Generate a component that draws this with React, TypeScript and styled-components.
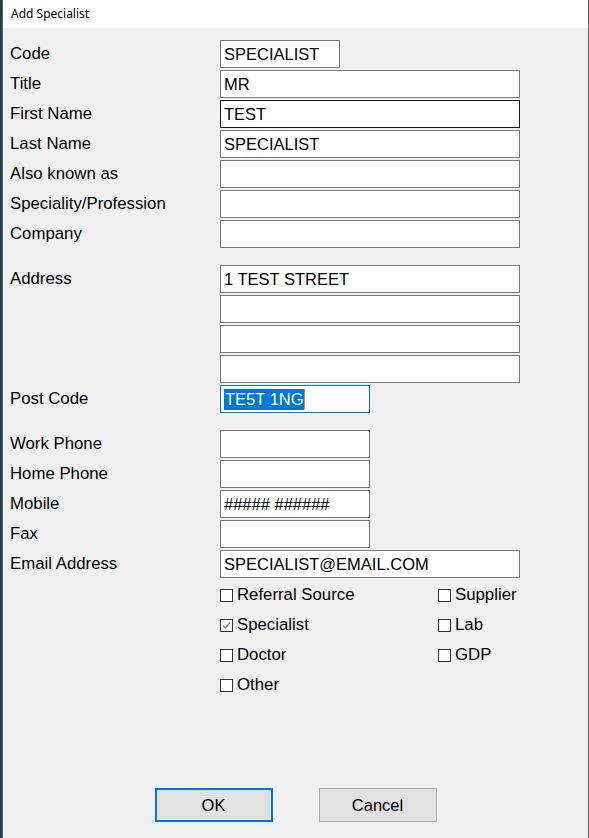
import { FC, ReactNode } from "react";
import styled, { createGlobalStyle } from "styled-components";

const GlobalStyle = createGlobalStyle`
    html, body {
        margin: 0;
        padding: 0;
        background: #1f3f48;
    }
`;

type FieldState = "normal" | "hover" | "focus";

interface RowProps {
    label: string;
    children: ReactNode;
}

const FormRow: FC<RowProps> = ({ label, children }) => (
    <StyledRow>
        <StyledLabel>{label}</StyledLabel>
        <StyledFieldStack>{children}</StyledFieldStack>
    </StyledRow>
);

const CheckBox: FC<{ label: string; checked?: boolean }> = ({ label, checked }) => (
    <StyledCheckItem>
        <StyledBox>
            {checked && (
                <svg width="11" height="11" viewBox="0 0 11 11">
                    <path d="M2 5.5 L4.5 8 L9 2.5" fill="none" stroke="#8a8a8a" strokeWidth="1.2" />
                </svg>
            )}
        </StyledBox>
        {label}
    </StyledCheckItem>
);

export default function App() {
    return (
        <>
            <GlobalStyle />
            <StyledDesktop>
                <StyledWindow>
                    <StyledTitleBar>Add Specialist</StyledTitleBar>
                    <StyledBody>
                        <StyledSection>
                            <FormRow label="Code">
                                <StyledField $width={120}>SPECIALIST</StyledField>
                            </FormRow>
                            <FormRow label="Title">
                                <StyledField>MR</StyledField>
                            </FormRow>
                            <FormRow label="First Name">
                                <StyledField $state="hover">TEST</StyledField>
                            </FormRow>
                            <FormRow label="Last Name">
                                <StyledField>SPECIALIST</StyledField>
                            </FormRow>
                            <FormRow label="Also known as">
                                <StyledField />
                            </FormRow>
                            <FormRow label="Speciality/Profession">
                                <StyledField />
                            </FormRow>
                            <FormRow label="Company">
                                <StyledField />
                            </FormRow>
                        </StyledSection>

                        <StyledSection>
                            <FormRow label="Address">
                                <StyledField>1 TEST STREET</StyledField>
                                <StyledField />
                                <StyledField />
                                <StyledField />
                            </FormRow>
                            <FormRow label="Post Code">
                                <StyledField $width={150} $state="focus">
                                    <StyledSelection>TE5T 1NG</StyledSelection>
                                    <StyledCaret />
                                </StyledField>
                            </FormRow>
                        </StyledSection>

                        <StyledSection>
                            <FormRow label="Work Phone">
                                <StyledField $width={150} />
                            </FormRow>
                            <FormRow label="Home Phone">
                                <StyledField $width={150} />
                            </FormRow>
                            <FormRow label="Mobile">
                                <StyledField $width={150}>##### ######</StyledField>
                            </FormRow>
                            <FormRow label="Fax">
                                <StyledField $width={150} />
                            </FormRow>
                            <FormRow label="Email Address">
                                <StyledField>SPECIALIST@EMAIL.COM</StyledField>
                            </FormRow>
                            <StyledCheckGrid>
                                <CheckBox label="Referral Source" />
                                <CheckBox label="Supplier" />
                                <CheckBox label="Specialist" checked />
                                <CheckBox label="Lab" />
                                <CheckBox label="Doctor" />
                                <CheckBox label="GDP" />
                                <CheckBox label="Other" />
                            </StyledCheckGrid>
                        </StyledSection>
                    </StyledBody>

                    <StyledFooter>
                        <StyledButton type="button" $default>
                            OK
                        </StyledButton>
                        <StyledButton type="button">Cancel</StyledButton>
                    </StyledFooter>
                </StyledWindow>
            </StyledDesktop>
        </>
    );
}

const StyledDesktop = styled.div`
    display: flex;
    width: 589px;
    height: 838px;
    padding-left: 2px;
    box-sizing: border-box;
    overflow: hidden;
`;

const StyledWindow = styled.div`
    flex: 1;
    display: flex;
    flex-direction: column;
    background: #f0f0f0;
    border-left: 1px solid #5f5f5f;
    border-right: 1px solid #5f5f5f;
    font-family: "Liberation Sans", Arial, sans-serif;
    font-size: 16.8px;
    color: #000;
`;

const StyledTitleBar = styled.div`
    height: 28px;
    background: #fff;
    padding-left: 8px;
    display: flex;
    align-items: center;
    font-family: "Noto Sans", "Open Sans", sans-serif;
    font-size: 12px;
    padding-bottom: 2px;
    box-sizing: border-box;
`;

const StyledBody = styled.div`
    padding: 12px 0 0 7px;
    display: flex;
    flex-direction: column;
    gap: 17px;
`;

const StyledSection = styled.div`
    display: flex;
    flex-direction: column;
    gap: 2px;
`;

const StyledRow = styled.div`
    display: flex;
    align-items: flex-start;
`;

const StyledLabel = styled.div`
    width: 210px;
    flex-shrink: 0;
    line-height: 28px;
    height: 28px;
`;

const StyledFieldStack = styled.div`
    display: flex;
    flex-direction: column;
    gap: 2px;
`;

const StyledField = styled.div<{ $width?: number; $state?: FieldState }>`
    width: ${({ $width }) => $width ?? 300}px;
    height: 28px;
    box-sizing: border-box;
    background: #fff;
    border: 1px solid
        ${({ $state }) => ($state === "hover" ? "#1a1a1a" : $state === "focus" ? "#0078d7" : "#7a7a7a")};
    padding: 0 3px;
    display: flex;
    align-items: center;
    white-space: nowrap;
    font-size: 16.5px;
`;

const StyledSelection = styled.span`
    background: #0078d7;
    color: #fff;
    line-height: 21px;
    padding: 0 0 0 1px;
`;

const StyledCaret = styled.span`
    width: 1px;
    height: 20px;
    background: #f08020;
`;

const StyledCheckGrid = styled.div`
    display: grid;
    grid-template-columns: 218px auto;
    grid-auto-rows: 30px;
    padding-left: 210px;
`;

const StyledCheckItem = styled.div`
    display: flex;
    align-items: center;
    gap: 4px;
    height: 30px;
`;

const StyledBox = styled.span`
    width: 13px;
    height: 13px;
    box-sizing: border-box;
    border: 1px solid #333;
    background: #fff;
    display: flex;
    align-items: center;
    justify-content: center;
    margin-top: 1px;
`;

const StyledFooter = styled.div`
    margin-top: auto;
    display: flex;
    justify-content: center;
    gap: 46px;
    padding-bottom: 16px;
`;

const StyledButton = styled.button<{ $default?: boolean }>`
    width: 118px;
    height: 34px;
    box-sizing: border-box;
    background: #e1e1e1;
    border: ${({ $default }) => ($default ? "2px solid #0078d7" : "1px solid #adadad")};
    font-family: "Liberation Sans", Arial, sans-serif;
    font-size: 16.5px;
    color: #000;
    padding: 0;
`;
